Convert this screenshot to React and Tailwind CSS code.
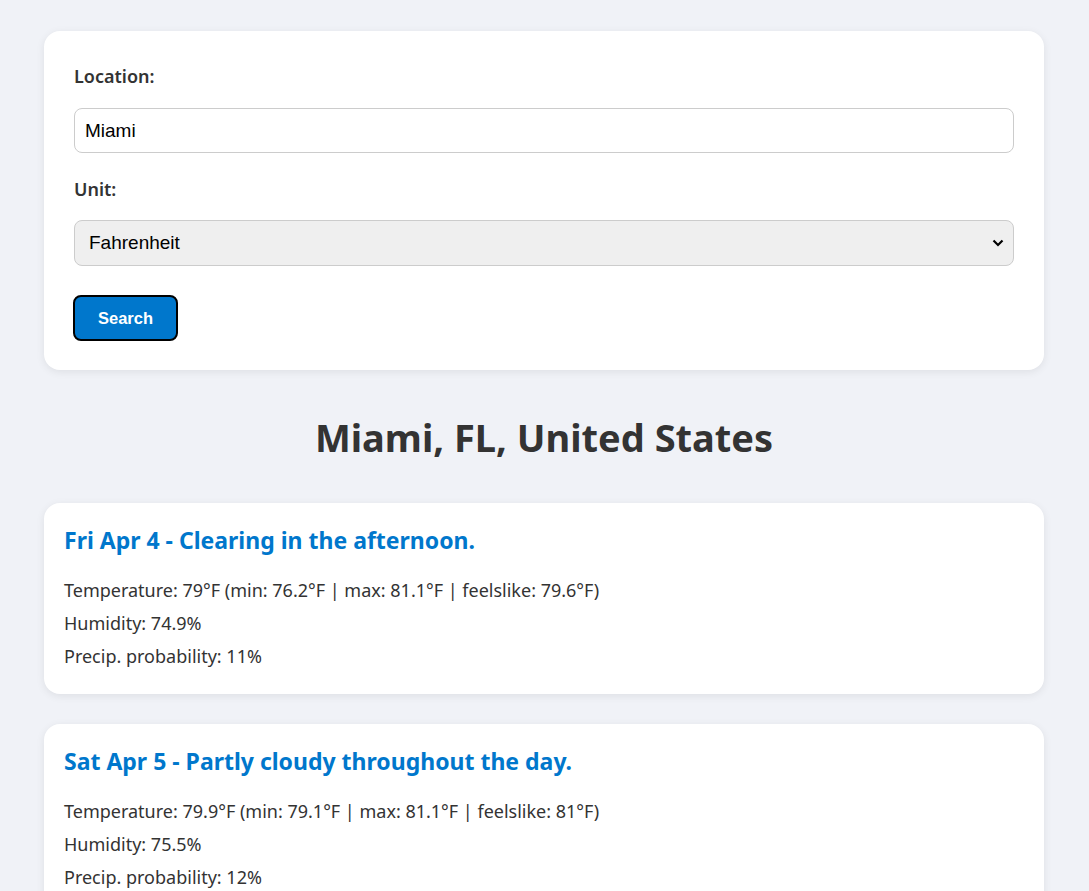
export default function App() {
  const days = [
    {
      title: "Fri Apr 4 - Clearing in the afternoon.",
      temp: "Temperature: 79°F (min: 76.2°F | max: 81.1°F | feelslike: 79.6°F)",
      hum: "Humidity: 74.9%",
      precip: "Precip. probability: 11%",
    },
    {
      title: "Sat Apr 5 - Partly cloudy throughout the day.",
      temp: "Temperature: 79.9°F (min: 79.1°F | max: 81.1°F | feelslike: 81°F)",
      hum: "Humidity: 75.5%",
      precip: "Precip. probability: 12%",
    },
  ];
  return (
    <div className="min-h-screen bg-[#f0f2f7] pl-[44px] pr-[45px] pt-[31px] pb-[40px] text-[#333]" style={{ fontFamily: '"Noto Sans", "Open Sans", sans-serif' }}>
      <div className="w-full">
        <div className="bg-white rounded-[16px] shadow-[0_2px_8px_rgba(0,0,0,0.08)] px-[30px] pt-[32px] pb-[29px]">
          <label className="block text-[18px] font-semibold text-[#333] leading-[26px]">Location:</label>
          <input
            defaultValue="Miami"
            className="mt-[19px] block w-full h-[45px] border border-[#ccc] rounded-[8px] px-[10px] text-[19px] text-black bg-white outline-none"
            style={{ fontFamily: '"Liberation Sans", Arial, sans-serif' }}
          />
          <label className="mt-[23px] block text-[18px] font-semibold text-[#333] leading-[26px]">Unit:</label>
          <div className="relative mt-[18px]">
            <select
              defaultValue="Fahrenheit"
              className="block w-full h-[46px] border border-[#ccc] rounded-[8px] pl-[14px] text-[19px] text-black bg-[#efefef] appearance-none outline-none"
              style={{ fontFamily: '"Liberation Sans", Arial, sans-serif' }}
            >
              <option>Fahrenheit</option>
              <option>Celsius</option>
            </select>
            <svg className="pointer-events-none absolute right-[10px] top-1/2 -translate-y-1/2" width="12" height="8" viewBox="0 0 12 8">
              <path d="M1.5 1.5 L6 6 L10.5 1.5" fill="none" stroke="#000" strokeWidth="2.2" />
            </svg>
          </div>
          <button
            className="mt-[29px] -ml-px block w-[105px] h-[46px] bg-[#0077cc] text-white font-bold text-[16.5px] rounded-[8px] border-2 border-black"
            style={{ fontFamily: '"Liberation Sans", Arial, sans-serif' }}
          >
            Search
          </button>
        </div>

        <h2 className="mt-[41px] mb-[40px] text-center text-[38px] font-bold leading-[52px] text-[#333]">Miami, FL, United States</h2>

        <div className="flex flex-col gap-[30px]">
          {days.map((d) => (
            <div key={d.title} className="bg-white rounded-[16px] shadow-[0_2px_8px_rgba(0,0,0,0.08)] px-[20px] pt-[22px] pb-[25px]">
              <h3 className="text-[23px] font-bold text-[#0077cc] leading-[30px]">{d.title}</h3>
              <div className="mt-[22px] flex flex-col gap-[7px] text-[18px] leading-[26px] text-[#333]">
                <p>{d.temp}</p>
                <p>{d.hum}</p>
                <p>{d.precip}</p>
              </div>
            </div>
          ))}
        </div>
      </div>
    </div>
  );
}
